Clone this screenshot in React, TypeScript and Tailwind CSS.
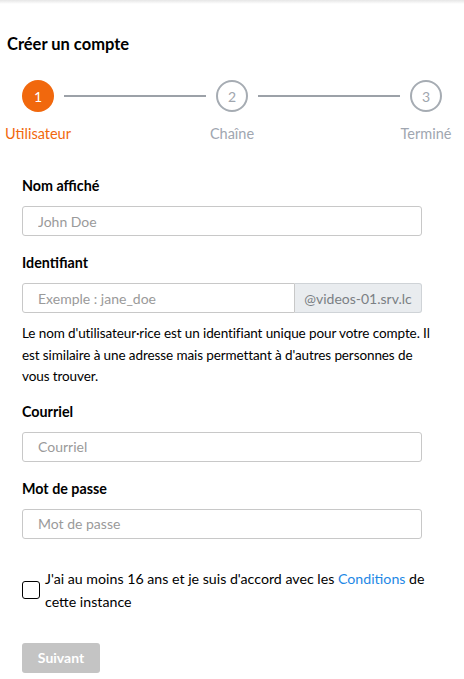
import { useState } from "react";

const steps = [
  { n: 1, label: "Utilisateur", active: true },
  { n: 2, label: "Chaîne", active: false },
  { n: 3, label: "Terminé", active: false },
];

function Field({ label, placeholder }: { label: string; placeholder: string }) {
  return (
    <div className="mb-[17px]">
      <label className="mb-[10px] block text-[14.3px] font-bold leading-[20px] text-black">{label}</label>
      <input
        placeholder={placeholder}
        className="h-[30px] w-[400px] rounded-[3px] border border-[#c8c8c8] px-[15px] text-[14px] text-black outline-none placeholder:text-[#9a9a9a]"
      />
    </div>
  );
}

export default function App() {
  const [agree, setAgree] = useState(false);

  return (
    <div className="min-h-screen bg-white font-['Lato','Noto_Sans',sans-serif] text-black">
      <div className="h-[4px] bg-gradient-to-b from-[#e6e6e6] to-white" />

      <h1 className="mt-[29px] px-[7px] text-[16.5px] font-bold leading-[22px]">Créer un compte</h1>

      {/* stepper */}
      <div className="mt-[25px] flex items-start px-[22px]">
        {steps.map((s, i) => (
          <div key={s.n} className="contents">
            {i > 0 && <div className="mx-[10px] mt-[15px] h-[2px] flex-1 bg-[#9ca1a8]" />}
            <div className="flex w-8 flex-col items-center">
              <div
                className={`flex h-8 w-8 items-center justify-center rounded-full text-[14px] ${
                  s.active ? "bg-[#f1680d] text-white" : "border-2 border-[#a6acb3] text-[#a0a6ae]"
                }`}
              >
                {s.n}
              </div>
              <span
                className={`mt-[12px] whitespace-nowrap text-[14.5px] leading-[20px] ${
                  s.active ? "text-[#f1680d]" : "text-[#a0a6b0]"
                }`}
              >
                {s.label}
              </span>
            </div>
          </div>
        ))}
      </div>

      <form className="mt-[32px] px-[22px]" onSubmit={(e) => e.preventDefault()}>
        <Field label="Nom affiché" placeholder="John Doe" />

        <div className="mb-[14px]">
          <label className="mb-[10px] block text-[14.3px] font-bold leading-[20px]">Identifiant</label>
          <div className="flex h-[30px] w-[400px]">
            <input
              placeholder="Exemple : jane_doe"
              className="min-w-0 flex-1 rounded-l-[3px] border border-[#c8c8c8] px-[15px] text-[14px] outline-none placeholder:text-[#9a9a9a]"
            />
            <span className="flex w-[127px] items-center justify-center rounded-r-[3px] border border-l-0 border-[#cfd3d7] bg-[#e9ecef] text-[14px] text-[#7b7f84]">
              @videos-01.srv.lc
            </span>
          </div>
          <p className="mt-[10px] text-[13.5px] leading-[21.5px] tracking-[-0.1px]">
            Le nom d'utilisateur·rice est un identifiant unique pour votre compte. Il est similaire à une
            adresse mais permettant à d'autres personnes de vous trouver.
          </p>
        </div>

        <Field label="Courriel" placeholder="Courriel" />
        <Field label="Mot de passe" placeholder="Mot de passe" />

        <div className="mt-[28px] flex items-start">
          <button
            type="button"
            onClick={() => setAgree(!agree)}
            className="mt-[14px] h-[18px] w-[18px] shrink-0 rounded-[3px] border-[1.5px] border-black bg-white"
          >
            {agree && <span className="block text-[12px] leading-[14px]">✓</span>}
          </button>
          <p className="ml-[5px] text-[14.2px] leading-[23px]">
            J'ai au moins 16 ans et je suis d'accord avec les <a className="text-[#1e88e5]">Conditions</a> de
            cette instance
          </p>
        </div>

        <button
          type="submit"
          disabled
          className="mt-[30px] h-[30px] w-[78px] rounded-[3px] bg-[#c4c4c4] text-[14px] font-bold text-white"
        >
          Suivant
        </button>
      </form>
    </div>
  );
}
